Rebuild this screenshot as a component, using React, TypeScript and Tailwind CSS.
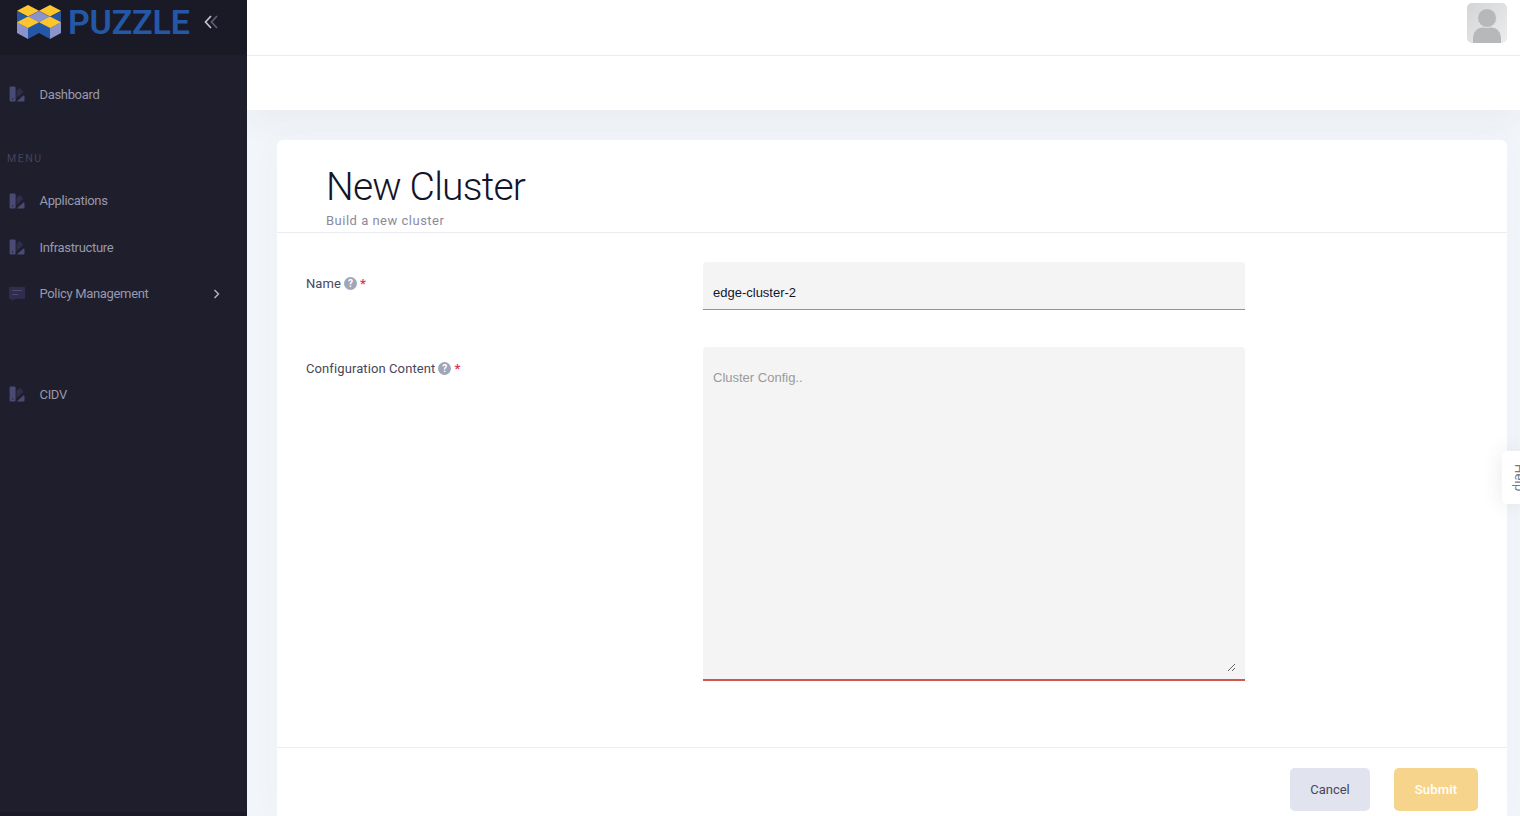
import { useState } from 'react';

const mainLinks = [
  { label: 'Applications', icon: 'swatch', arrow: false },
  { label: 'Infrastructure', icon: 'swatch', arrow: false },
  { label: 'Policy Management', icon: 'chat', arrow: true },
];

function SwatchIcon() {
  return (
    <svg width="18" height="18" viewBox="0 0 18 18" className="shrink-0">
      <path d="M8.5 5.800l2.600-2.300a1 1 0 0 1 1.400.1l2.300 2.500a1 1 0 0 1-.1 1.400L8.500 13z" fill="#2f2d4b" />
      <path d="M8.700 16.500l6.700-6h.300a.9.9 0 0 1 .8.9v4.100a1 1 0 0 1-1 1z" fill="#494b74" />
      <path
        d="M2.600 1.500h4a1 1 0 0 1 1 1v13a1 1 0 0 1-1 1h-4a1 1 0 0 1-1-1v-13a1 1 0 0 1 1-1zm2 11.700a.7.7 0 1 0 0 1.400.7.7 0 0 0 0-1.400z"
        fill="#494b74"
        fillRule="evenodd"
      />
    </svg>
  );
}

function ChatIcon() {
  return (
    <svg width="18" height="18" viewBox="0 0 18 18" className="shrink-0">
      <path d="M2 1.800h14a1 1 0 0 1 1 1V13a1 1 0 0 1-1 1H7l-3.500 2.300V14H2a1 1 0 0 1-1-1V2.800a1 1 0 0 1 1-1z" fill="#2f2d4b" />
      <path d="M4.500 5.500h9M4.500 9.500h5" stroke="#494b74" strokeWidth="1.200" strokeLinecap="round" />
    </svg>
  );
}

function LogoMark() {
  return (
    <svg width="44" height="34" viewBox="0 0 44 34" className="shrink-0">
      <path d="M0 6l11 6 11-6 11 6 11-6v11l-11 6-11-6-11 6-11-6z" fill="#2458a6" />
      <path d="M22 6l11 5.700-11 5.500-11-5.500z" fill="#8b93cb" />
      <path d="M0 17l11 6v11L0 28zM44 17l-11 6v11l11-6z" fill="#8b93cb" />
      <path d="M11 23l11-6 11 6v11l-11-6-11 6z" fill="#2458a6" />
      <path d="M11 0l11 5.700-11 5.700L0 5.700zM33 0l11 5.700-11 5.700-11-5.700z" fill="#fdc62f" />
      <path d="M11 11.500l11 5.700-11 5.700L0 17.200zM33 11.500l11 5.700-11 5.700-11-5.700z" fill="#fdc62f" />
    </svg>
  );
}

function NavItem({ label, icon, arrow }: { label: string; icon: string; arrow: boolean }) {
  return (
    <a href="#" className="flex h-[46.5px] items-center pr-[27px] pl-2 text-[13px] tracking-[-0.33px] text-[#9899ac]">
      {icon === 'chat' ? <ChatIcon /> : <SwatchIcon />}
      <span className="ml-[13.5px] flex-1">{label}</span>
      {arrow && (
        <svg width="7" height="10" viewBox="0 0 7 10" fill="none" stroke="#b7b8c9" strokeWidth="1.400">
          <path d="M1.500 1l4 4-4 4" />
        </svg>
      )}
    </a>
  );
}

function Sidebar() {
  return (
    <aside className="z-20 flex w-[247px] shrink-0 flex-col border-b-4 border-[#1a1a27] bg-[#1e1e2d]">
      <div className="flex h-[55px] shrink-0 items-start bg-[#1a1a27] pt-[5px] pl-[16.5px]">
        <LogoMark />
        <span className="ml-[7.5px] w-[124px] text-[34px] leading-[34px] font-semibold tracking-[-0.2px] text-[#2458a6]">
          PUZZLE
        </span>
        <svg width="14" height="14" viewBox="0 0 14 14" fill="none" strokeWidth="1.700" className="mt-[10px] ml-3">
          <path d="M7 1L1.500 7 7 13" stroke="#c2c3d4" />
          <path d="M13 1L7.500 7 13 13" stroke="#5d5e70" />
        </svg>
      </div>
      <nav className="flex flex-col pt-4">
        <NavItem label="Dashboard" icon="swatch" arrow={false} />
        <h4 className="mt-[30px] mb-[8px] pl-[7px] text-[10.5px] leading-[22px] tracking-[1.5px] text-[#434459]">MENU</h4>
        {mainLinks.map((link) => (
          <NavItem key={link.label} {...link} />
        ))}
        <div className="h-[54px]" />
        <NavItem label="CIDV" icon="swatch" arrow={false} />
      </nav>
    </aside>
  );
}

function FieldLabel({ text }: { text: string }) {
  return (
    <label className="flex w-[397px] shrink-0 items-center self-start pt-[11px] text-[13px] leading-5 tracking-[0.1px] text-[#48465b]">
      <span className="pt-px">{text}</span>
      <span className="ml-[3px] flex size-[13px] items-center justify-center rounded-full bg-[#a1a5b9] text-[10px] leading-none font-bold text-white">
        ?
      </span>
      <span className="ml-[3px] font-bold text-[#e0355a]">*</span>
    </label>
  );
}

function Avatar() {
  return (
    <svg width="40" height="40" viewBox="0 0 40 40">
      <defs>
        <linearGradient id="avatar-bg" x1="0" y1="0" x2="1" y2="1">
          <stop offset="0" stopColor="#d3d4d5" />
          <stop offset="1" stopColor="#eceded" />
        </linearGradient>
        <clipPath id="avatar-clip">
          <rect width="40" height="40" rx="5" />
        </clipPath>
      </defs>
      <g clipPath="url(#avatar-clip)">
        <rect width="40" height="40" fill="url(#avatar-bg)" />
        <path d="M6 41v-5c0-7 4-11.500 10-11.500h8c6 0 10 4.500 10 11.500v5z" fill="#b7b8ba" />
        <circle cx="20" cy="15" r="9.500" fill="#b7b8ba" stroke="#dedfe0" />
      </g>
    </svg>
  );
}

export default function App() {
  const [name, setName] = useState('edge-cluster-2');
  const [config, setConfig] = useState('');

  return (
    <div className="relative flex h-[816px] w-[1520px] overflow-hidden bg-[#f2f6fa] font-[Roboto,sans-serif]">
      <Sidebar />
      <div className="flex min-w-0 flex-1 flex-col">
        <header className="z-10 h-[110px] shrink-0 bg-white shadow-[0_10px_30px_0_rgba(60,60,80,0.05)]">
          <div className="flex h-14 justify-end border-b border-[#ebedf2] pt-[3px] pr-[13px]">
            <Avatar />
          </div>
        </header>
        <main className="z-10 mt-[30px] mr-[13px] ml-[30px] flex flex-1 flex-col rounded-t-md bg-white shadow-[0_0_30px_0_rgba(82,63,105,0.03)]">
          <div className="h-[93px] shrink-0 border-b border-[#ebedf2] pt-[24px] pl-[49px]">
            <h1 className="text-[39px] leading-[47px] font-light tracking-[-0.8px] text-[#14142b]">New Cluster</h1>
            <p className="text-[13px] leading-5 tracking-[0.5px] text-[#8a8aa0]">Build a new cluster</p>
          </div>
          <form className="flex h-[514px] shrink-0 flex-col pt-[29px] pl-[29px]">
            <div className="flex">
              <FieldLabel text="Name" />
              <input
                value={name}
                onChange={(e) => setName(e.target.value)}
                className="h-12 w-[542px] rounded-t border-b border-[#949494] bg-[#f4f4f4] px-[10px] pt-[14px] font-['Liberation_Sans',sans-serif] text-[13px] text-[#14142b] outline-none"
              />
            </div>
            <div className="mt-[37px] flex">
              <FieldLabel text="Configuration Content" />
              <div className="h-[334px] w-[542px] rounded-t border-b-2 border-[#d0574f] bg-[#f4f4f4] pt-[23px] pr-[9px] pb-[7px] pl-2">
                <textarea
                  value={config}
                  onChange={(e) => setConfig(e.target.value)}
                  placeholder="Cluster Config.."
                  className="block h-[302px] w-full resize-y px-[2px] font-['Liberation_Sans',sans-serif] text-[13px] leading-4 outline-none placeholder:text-[#9a9a9a]"
                />
              </div>
            </div>
          </form>
          <footer className="flex flex-1 justify-end gap-6 border-t border-[#ebedf2] pt-5 pr-[29px]">
            <button className="h-[43px] w-20 rounded-[5px] bg-[#e1e4ee] text-[13px] text-[#48465b]">Cancel</button>
            <button className="h-[43px] w-[84px] rounded-[5px] bg-[#f7d48b] text-[13px] font-medium tracking-[0.2px] text-white">
              Submit
            </button>
          </footer>
        </main>
      </div>
      <div className="absolute top-[451px] right-0 z-20 flex h-[53px] w-[18px] items-center justify-start overflow-hidden rounded-l-[5px] bg-white pl-[9px] shadow-[0_0_20px_0_rgba(69,65,78,0.12)]">
        <span className="text-[13px] leading-4 tracking-[0.2px] text-[#74788d] [writing-mode:vertical-rl]">Help</span>
      </div>
    </div>
  );
}
